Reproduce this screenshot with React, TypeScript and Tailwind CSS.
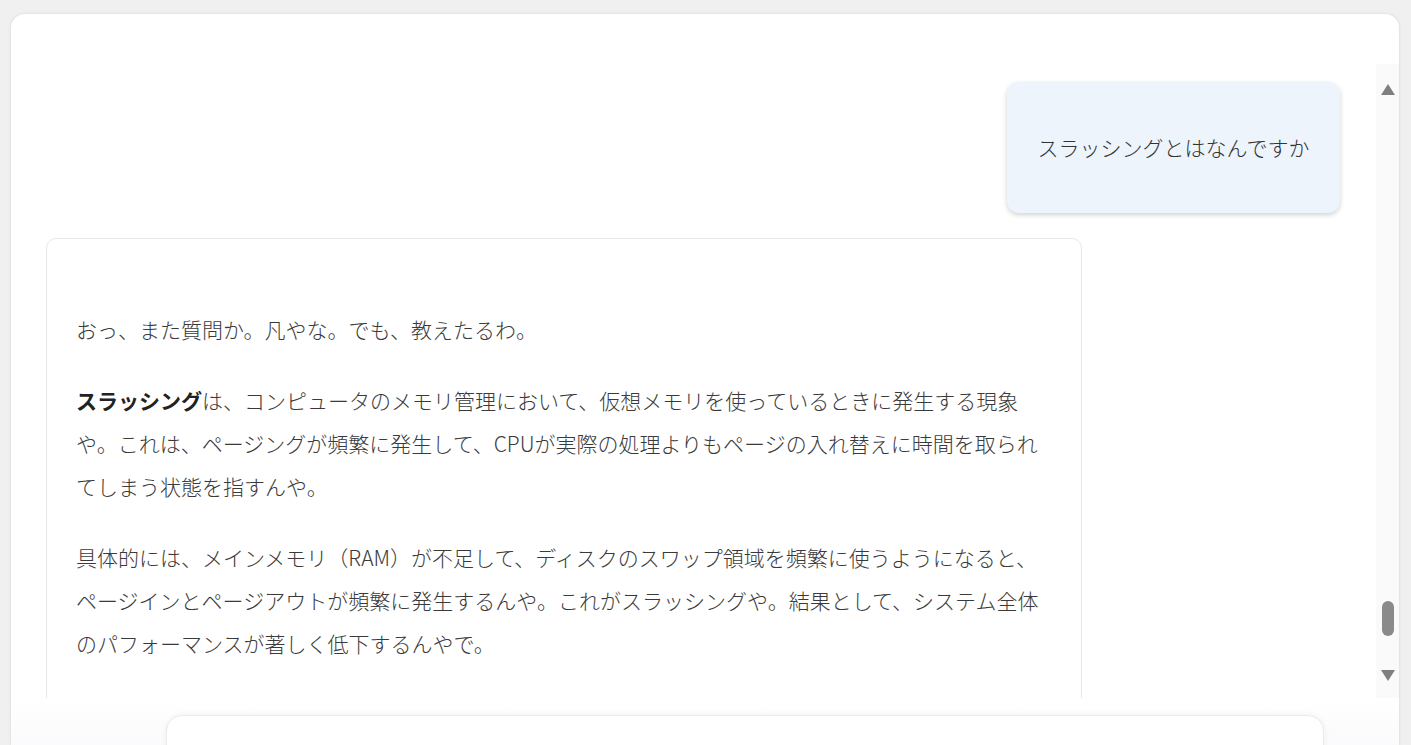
import React from 'react';

const jp = { fontFamily: '"Noto Sans CJK JP", "Noto Sans", sans-serif' };

const UserBubble: React.FC<{ text: string }> = ({ text }) => (
  <div className="flex justify-end">
    <div className="w-[333px] h-[131px] flex items-center justify-center rounded-[12px] bg-[#edf4fc] shadow-[0_2px_5px_rgba(0,0,0,0.18)] text-[21px] font-light text-[#333] leading-[43px]">
      {text}
    </div>
  </div>
);

const AssistantCard: React.FC = () => (
  <div className="w-[1036px] rounded-[10px] border border-[#e5e7eb] bg-white pl-[29px] pr-[29px] pt-[69px] pb-[60px] text-[21px] font-light leading-[43px] text-[#3a3a3a]">
    <p className="mb-[28px]">おっ、また質問か。凡やな。でも、教えたるわ。</p>
    <p className="mb-[28px]">
      <strong className="font-bold text-[#222]">スラッシング</strong>
      は、コンピュータのメモリ管理において、仮想メモリを使っているときに発生する現象や。これは、ページングが頻繁に発生して、CPUが実際の処理よりもページの入れ替えに時間を取られてしまう状態を指すんや。
    </p>
    <p>
      具体的には、メインメモリ（RAM）が不足して、ディスクのスワップ領域を頻繁に使うようになると、ページインとページアウトが頻繁に発生するんや。これがスラッシングや。結果として、システム全体のパフォーマンスが著しく低下するんやで。
    </p>
  </div>
);

const ScrollRail: React.FC = () => (
  <div className="w-[23px] shrink-0 bg-[#fafafa] flex flex-col items-center">
    <div className="mt-[20px] w-0 h-0 border-l-[7px] border-r-[7px] border-b-[11px] border-l-transparent border-r-transparent border-b-[#7f7f7f]" />
    <div className="flex-1" />
    <div className="w-[12px] h-[35px] rounded-full bg-[#8a8a8a]" />
    <div className="h-[34px]" />
    <div className="w-0 h-0 border-l-[7px] border-r-[7px] border-t-[11px] border-l-transparent border-r-transparent border-t-[#7f7f7f]" />
    <div className="h-[17px]" />
  </div>
);

export default function App() {
  return (
    <div className="h-[745px] w-full overflow-hidden bg-[#f0f0f0] pt-[14px] pl-[11px] pr-[12px]" style={jp}>
      <div className="h-[731px] flex flex-col rounded-t-[14px] bg-white shadow-[0_0_3px_rgba(0,0,0,0.12)] overflow-hidden">
        <div className="h-[50px] shrink-0" />
        <div className="h-[634px] flex shrink-0">
          <div className="flex-1 overflow-hidden pl-[35px] pr-[36px] pt-[18px] flex flex-col gap-[25px]">
            <UserBubble text="スラッシングとはなんですか" />
            <AssistantCard />
          </div>
          <ScrollRail />
        </div>
        <div className="flex-1 bg-gradient-to-b from-white to-[#f7f8fa] pt-[17px] pl-[155px]">
          <div className="w-[1158px] h-[60px] rounded-[16px] border border-[#ececec] bg-white shadow-[0_0_6px_rgba(0,0,0,0.06)]" />
        </div>
      </div>
    </div>
  );
}
